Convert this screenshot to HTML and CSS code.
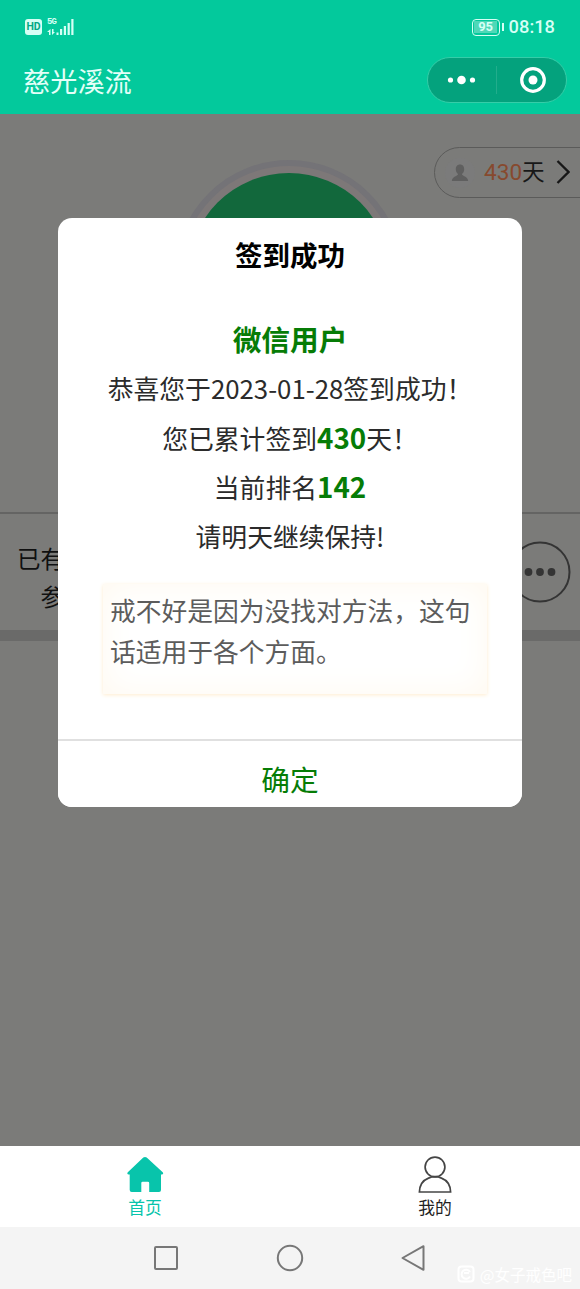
FILE: index.html
```html
<!DOCTYPE html>
<html lang="zh-CN">
<head>
<meta charset="utf-8">
<title>慈光溪流</title>
<link rel="stylesheet" href="styles.css">
</head>
<body>
<div class="screen">
  <header class="header">
    <div class="status">
      <div class="status-left">
        <span class="hd">HD</span>
        <span class="network"><span class="network-type">5G</span>
          <svg class="signal" width="28" height="18" viewBox="0 0 28 18" fill="#d6fff5"><path d="M2 12v5h1.500v-6L0 14h2zM5 11v6l3-3H6.500v-3zM9.500 14.500h2V17h-2zM13 11h2.200v6H13zM16.800 8H19v9h-2.200zM20.600 5h2.200v12h-2.200zM24.300 1h2.200v16h-2.200z"/></svg>
        </span>
      </div>
      <div class="status-right">
        <span class="battery"><span class="battery-level">95</span></span><span class="battery-tip"></span>
        <span class="clock">08:18</span>
      </div>
    </div>
    <div class="titlebar">
      <h1 class="app-title">慈光溪流</h1>
      <div class="capsule">
        <svg class="capsule-icon" width="68" height="44" viewBox="0 0 68 44" fill="#fff"><circle cx="22.500" cy="22" r="2.600"/><circle cx="33.500" cy="22" r="4.300"/><circle cx="44.500" cy="22" r="2.600"/></svg>
        <span class="capsule-divider"></span>
        <svg class="capsule-icon" width="68" height="44" viewBox="0 0 68 44"><circle cx="36" cy="22" r="11.300" fill="none" stroke="#fff" stroke-width="3.200"/><circle cx="36" cy="22" r="4.500" fill="#fff"/></svg>
      </div>
    </div>
  </header>

  <main class="page">
    <section class="hero">
      <div class="checkin-ring"><div class="checkin-button"></div></div>
      <div class="days-pill">
        <svg width="30" height="30" viewBox="0 0 30 30"><circle cx="15" cy="15" r="15" fill="#7b7b7b"/><path d="M15 6.500c-3 0-4.300 2.200-4.200 4.900.1 2 1 3.600 2.300 4.500-.1 2.200-6 2.300-6.300 7.100h16.400c-.3-4.800-6.200-4.900-6.300-7.100 1.300-.9 2.200-2.500 2.300-4.500.1-2.700-1.200-4.900-4.200-4.900z" fill="#5f5f5f"/></svg>
        <span class="days"><span class="days-number">430</span>天</span>
        <svg class="chevron" width="14" height="24" viewBox="0 0 14 24" fill="none" stroke="#171717" stroke-width="2.300"><path d="M1.500 1l11 11-11 11"/></svg>
      </div>
    </section>
    <section class="participants">
      <div class="participants-text"><span>已有</span><span>参</span></div>
      <svg class="more" width="62" height="62" viewBox="0 0 62 62"><circle cx="31" cy="31" r="29.500" fill="none" stroke="#343434" stroke-width="2"/><g fill="#343434"><circle cx="19.500" cy="31" r="3.900"/><circle cx="31" cy="31" r="3.900"/><circle cx="42.500" cy="31" r="3.900"/></g></svg>
    </section>

    <div class="dialog">
      <h2 class="dialog-title">签到成功</h2>
      <div class="dialog-body">
        <p class="line user">微信用户</p>
        <p class="line">恭喜您于2023-01-28签到成功！</p>
        <p class="line">您已累计签到<b class="number">430</b>天！</p>
        <p class="line">当前排名<b class="number">142</b></p>
        <p class="line">请明天继续保持!</p>
        <div class="quote">戒不好是因为没找对方法，这句话适用于各个方面。</div>
      </div>
      <button class="confirm">确定</button>
    </div>
  </main>

  <nav class="tabs">
    <div class="tab tab-active">
      <svg width="38" height="38" viewBox="0 0 38 38" fill="#08c4ab"><path d="M17.300 1.600q1.700-1.400 3.400 0L36.700 16.300q1.300 1.900-.9 2.200h-.8V34q0 2-2 2H23.200V27q0-1.300-1.300-1.300h-5.300q-1.300 0-1.300 1.300v9H5.700q-2 0-2-2V18.500h-1q-2.200-.3-.9-2.200z"/></svg>
      <span>首页</span>
    </div>
    <div class="tab">
      <svg width="38" height="38" viewBox="0 0 38 38" fill="none" stroke="#454545" stroke-width="1.700"><circle cx="19" cy="11" r="9.900"/><path d="M12.500 22.100Q3.700 25.500 3.400 36h31.200Q34.300 25.500 25.500 22.100 19 19.300 12.500 22.100z"/></svg>
      <span>我的</span>
    </div>
  </nav>

  <footer class="system-nav">
    <svg width="28" height="28" viewBox="0 0 28 28" fill="none" stroke="#777" stroke-width="2"><rect x="3" y="3" width="22" height="22" rx="1"/></svg>
    <svg width="28" height="28" viewBox="0 0 28 28" fill="none" stroke="#777" stroke-width="2"><circle cx="14" cy="14" r="12.200"/></svg>
    <svg width="28" height="28" viewBox="0 0 28 28" fill="none" stroke="#777" stroke-width="2" stroke-linejoin="round"><path d="M23.500 2.200v23.600L2.500 14z"/></svg>
    <div class="watermark">
      <svg width="18" height="18" viewBox="0 0 18 18" fill="none" stroke="#fff" stroke-width="2"><rect x="1.500" y="1.500" width="15" height="15" rx="3"/><path d="M13 7a4.500 4.500 0 1 0 0 4.500M7 8h5"/></svg>
      <span>@女子戒色吧</span>
    </div>
  </footer>
</div>
</body>
</html>
```
FILE: styles.css
```css
* { box-sizing: border-box; }
body, h1, h2, p { margin: 0; }
body { font-family: "Noto Sans CJK SC", sans-serif; }
.screen { width: 580px; height: 1289px; display: flex; flex-direction: column; overflow: hidden; }
svg { display: block; flex: none; }

.header { height: 114px; background: #03c99c; flex: none; }
.status { height: 54px; padding: 0 25px; display: flex; justify-content: space-between; align-items: center; color: #d6fff5; }
.status-left, .status-right { display: flex; align-items: center; }
.hd { width: 17px; height: 16px; border-radius: 3px; background: #d6fff5; color: #03a884; font: 700 10.500px/16px Roboto, sans-serif; text-align: center; }
.network { position: relative; margin-left: 5px; }
.network-type { position: absolute; left: 0; top: 0; font: 700 9px/9px "Liberation Mono", monospace; letter-spacing: -1px; }
.battery { width: 28px; height: 17px; border: 1.500px solid #d6fff5; border-radius: 4px; padding: 1.500px; }
.battery-level { display: block; height: 12px; background: #4fd8b8; font: 700 13px/12px Roboto, sans-serif; text-align: center; }
.battery-tip { width: 2px; height: 8px; margin: 0 5px 0 2px; background: #d6fff5; }
.clock { font: 500 18.300px/24px Roboto, sans-serif; }

.titlebar { display: flex; justify-content: space-between; padding: 3px 13px 0 23px; }
.app-title { font-size: 27.200px; line-height: 46px; font-weight: 400; color: #e3fff8; }
.capsule { width: 140px; height: 46px; border: 1px solid #35cda8; border-radius: 23px; background: #04a27d; display: flex; align-items: center; }
.capsule-divider { width: 1px; height: 28px; background: #22ad8c; }

.page { height: 1032px; position: relative; background: #7b7b79; flex: none; overflow: hidden; }
.hero { height: 400px; padding-top: 46px; border-bottom: 2px solid #646463; position: relative; }
.checkin-ring { width: 228px; height: 228px; margin-left: 175px; border: 6px solid #747377; border-radius: 50%; padding: 7px; background: #7d7878; }
.checkin-button { width: 202px; height: 202px; border-radius: 50%; background: #12683c; }
.days-pill { position: absolute; right: -26px; top: 33px; width: 172px; height: 51px; border: 1.500px solid #5b5b5a; border-radius: 26px; display: flex; align-items: center; padding-left: 10px; }
.days { margin-left: 9px; font: 22.600px/48px Roboto, "Noto Sans CJK SC", sans-serif; color: #181818; white-space: nowrap; }
.days-number { color: #87492e; }
.chevron { margin: -2px 0 0 11px; }
.participants { height: 127px; border-bottom: 11px solid #6a6a69; padding: 25px 9px 0 17px; display: flex; justify-content: space-between; }
.participants-text { width: 47px; display: flex; flex-direction: column; align-items: flex-end; font-size: 23.500px; line-height: 38px; color: #101010; }
.more { margin-top: 2px; }

.dialog { position: absolute; left: 58px; top: 104px; width: 464px; height: 589px; border-radius: 14px; background: #fff; display: flex; flex-direction: column; overflow: hidden; }
.dialog-title { padding-top: 16px; font-size: 27.500px; line-height: 40px; font-weight: 700; text-align: center; color: #000; }
.dialog-body { flex: 1; padding: 40px 34px 0; }
.line { height: 49.300px; font-size: 25.800px; line-height: 49.300px; text-align: center; color: #2b2b2b; white-space: nowrap; }
.user { font-size: 28.700px; font-weight: 700; color: #067c06; }
.number { font-size: 27.800px; color: #067c06; }
.quote { width: 384px; height: 110px; margin: 24px 0 0 11px; padding: 5px 7px; font-size: 25.750px; line-height: 41px; color: #5c5c5c; box-shadow: 0 1px 4px #ffecce, inset 0 0 34px #fff9ef; }
.confirm { height: 68px; border: 0; border-top: 2px solid #e0e0e0; background: #fff; padding: 9px 0 0; font: 28.700px/40px "Noto Sans CJK SC", sans-serif; color: #067c06; }

.tabs { height: 81px; background: #fff; display: flex; flex: none; }
.tab { flex: 1; display: flex; flex-direction: column; align-items: center; padding-top: 10px; font-size: 16.800px; line-height: 24px; color: #222; }
.tab span { margin-top: 1px; }
.tab-active { color: #08c4ab; }
.system-nav { height: 62px; background: #f4f4f4; display: flex; gap: 96px; padding: 17px 0 0 152px; position: relative; flex: none; }
.watermark { position: absolute; right: 8px; bottom: 4px; display: flex; align-items: center; gap: 5px; font-size: 15.500px; line-height: 22px; color: #fff; }
```
